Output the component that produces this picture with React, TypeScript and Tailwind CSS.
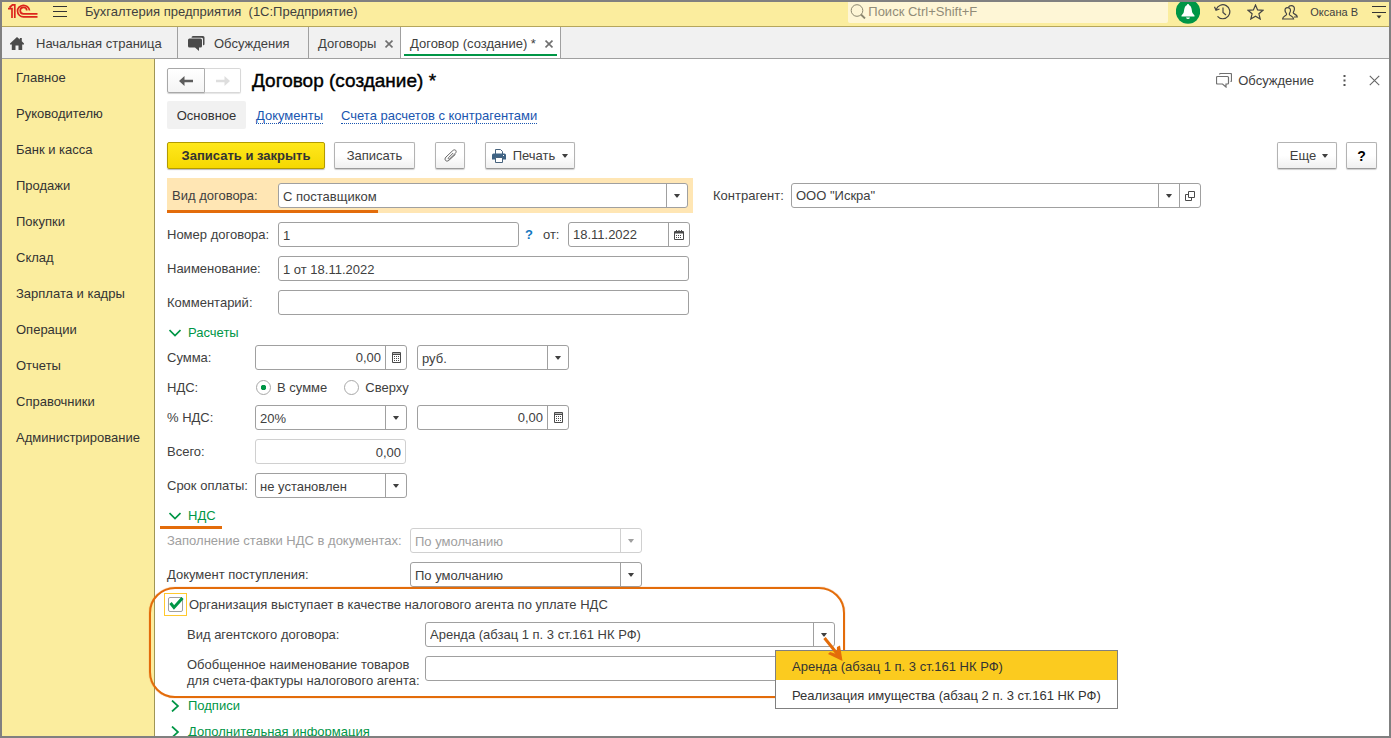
import React from "react";
import type { ReactNode } from "react";

const sections = [
  "Главное",
  "Руководителю",
  "Банк и касса",
  "Продажи",
  "Покупки",
  "Склад",
  "Зарплата и кадры",
  "Операции",
  "Отчеты",
  "Справочники",
  "Администрирование",
];

const agentKinds = [
  "Аренда (абзац 1 п. 3 ст.161 НК РФ)",
  "Реализация имущества (абзац 2 п. 3 ст.161 НК РФ)",
];

const field = "h-[25px] rounded-[3px] border border-[#a0a0a0] bg-white";
const input = "min-w-0 w-full bg-transparent px-1 pt-px outline-none";
const plainButton =
  "flex h-[27px] items-center justify-center rounded-[2px] border border-[#b3b3b3] border-b-[#9a9a9a] bg-linear-to-b from-white from-50% to-[#f0f0f0] shadow-[0_1px_1px_#cfcfcf]";

function Caret() {
  return (
    <svg width="6" height="4" viewBox="0 0 6 4" aria-hidden="true" className="shrink-0">
      <path d="M0 0H6L3.500 3.500H2.500Z" fill="currentColor" />
    </svg>
  );
}

function Calculator() {
  return (
    <svg width="9" height="11" viewBox="0 0 9 11" fill="none" aria-hidden="true">
      <path d="M1 1H8V2H1Z" fill="#b5b5b5" />
      <path d="M.5 .5H8.500V10.500H.5ZM.5 2.500H8.500" stroke="#4a4a4a" />
      <path d="M2 4.500H7M2 6.500H7M2 8.500H7" stroke="#4a4a4a" strokeDasharray="1 1" />
    </svg>
  );
}

function Calendar() {
  return (
    <svg width="10" height="10" viewBox="0 0 10 10" fill="none" aria-hidden="true">
      <path d="M.5 1.500H9.500V9.500H.5Z" stroke="#4a4a4a" />
      <path d="M1 2H9V3.500H1Z" fill="#4a4a4a" />
      <path d="M2.500 0V2M5 0V2M7.500 0V2" stroke="#4a4a4a" />
      <path d="M2 5.500H8M2 7.500H8" stroke="#4a4a4a" strokeDasharray="1 1" />
    </svg>
  );
}

function OpenIcon() {
  return (
    <svg width="10" height="10" viewBox="0 0 10 10" fill="none" aria-hidden="true">
      <path d="M3.500 .5H9.500V6.500H3.500ZM3.500 3.500H.5V9.500H6.500V6.500" stroke="#4a4a4a" />
    </svg>
  );
}

function Cross({ size }: { size: number }) {
  return (
    <svg width={size} height={size} viewBox="0 0 10 10" aria-hidden="true">
      <path d="M.7 .7L9.300 9.300M9.300 .7L.7 9.300" stroke="currentColor" strokeWidth={size < 10 ? 2 : 1} />
    </svg>
  );
}

function Chats({ filled }: { filled?: boolean }) {
  return filled ? (
    <svg width="17" height="15" viewBox="0 0 17 15" aria-hidden="true">
      <path d="M5 0H15Q16.500 0 16.500 1.500V8.500L15 9.500V3Q15 1.700 13.500 1.700H3.500Q3.500 0 5 0Z" fill="#4a4a4a" />
      <path d="M1.500 2.500H12.500Q14 2.500 14 4V10Q14 11.500 12.500 11.500H11V15L7 11.500H1.500Q0 11.500 0 10V4Q0 2.500 1.500 2.500Z" fill="#4a4a4a" />
    </svg>
  ) : (
    <svg width="16" height="15" viewBox="0 0 16 15" fill="none" stroke="#707070" strokeWidth="1.200" aria-hidden="true">
      <path d="M1.500 3.500H11.500Q12.500 3.500 12.500 4.500V10Q12.500 11 11.500 11H10V14L6.500 11H1.500Q.5 11 .5 10V4.500Q.5 3.500 1.500 3.500Z" />
      <path d="M3.500 1.500Q3.700 .5 4.500 .5H14.500Q15.500 .5 15.500 1.500V7.500Q15.500 8.500 14.500 8.500" />
    </svg>
  );
}

function Logo() {
  return (
    <svg width="30" height="14" viewBox="0 0 30 14" fill="none" stroke="#dc241c" aria-label="1С" className="mt-0.5 self-start">
      <path d="M0 4.700H4V14M1.500 3.500L4.500 .8H6.800V14" strokeWidth="1.700" />
      <path d="M21.500 6.500A6 5.800 0 1 0 15.500 12.900H29.500" strokeWidth="1.700" />
      <path d="M18.800 6.500A3.300 3.300 0 1 0 15.500 9.900H29.500" strokeWidth="1.700" />
    </svg>
  );
}

function Select({ id, value, className, disabled, label }: { id: string; value: string; className: string; disabled?: boolean; label?: string }) {
  return (
    <div
      className={`grid grid-cols-[1fr_21px] rounded-[3px] border bg-white h-[25px] ${disabled ? "border-[#d0d0d0] text-[#a0a0a0]" : "border-[#a0a0a0]"} ${className}`}
    >
      <select
        id={id}
        aria-label={label}
        disabled={disabled}
        className="col-span-2 col-start-1 row-start-1 min-w-0 appearance-none bg-transparent pl-1 pt-0.5 opacity-100 outline-none"
      >
        <option>{value}</option>
      </select>
      <span
        className={`pointer-events-none col-start-2 row-start-1 flex items-center justify-center border-l ${disabled ? "border-[#d0d0d0]" : "border-[#a0a0a0]"}`}
      >
        <Caret />
      </span>
    </div>
  );
}

function InnerButton({ label, children }: { label: string; children: ReactNode }) {
  return (
    <button type="button" aria-label={label} className="flex w-[21px] shrink-0 items-center justify-center border-l border-[#a0a0a0]">
      {children}
    </button>
  );
}

function Group({ title, open }: { title: string; open?: boolean }) {
  return (
    <button type="button" aria-expanded={!!open} className="flex h-[26px] items-center gap-[7px] pl-0.5 pt-0.5 text-[#009646]">
      <svg width="12" height="12" viewBox="0 0 12 12" fill="none" stroke="currentColor" strokeWidth="1.700" aria-hidden="true">
        {open ? <path d="M.5 3L6 8.500L11.500 3" /> : <path d="M3 .5L9 6L3 11.500" />}
      </svg>
      {title}
    </button>
  );
}

function TopBar() {
  return (
    <header className="flex h-[25px] shrink-0 items-center border-b border-[#b5a65c] bg-[#fbed9e] pl-1.5 pr-[3px]">
      <Logo />
      <button type="button" aria-label="Меню" className="ml-[15px] mt-1 self-start">
        <svg width="14" height="12" viewBox="0 0 14 12" stroke="#333" aria-hidden="true" className="block">
          <path d="M0 .5H14M0 5.500H14M0 10.500H14" />
        </svg>
      </button>
      <h1 className="ml-[18px] whitespace-pre pb-1">Бухгалтерия предприятия  (1С:Предприятие)</h1>
      <label className="ml-auto flex h-[21px] w-[320px] items-center self-start rounded-b-[2px] bg-[#fef6d6] pl-0.5">
        <svg width="16" height="15" viewBox="0 0 16 15" fill="none" stroke="#8c8770" aria-hidden="true" className="-mt-0.5">
          <circle cx="7" cy="6.500" r="5.800" />
          <path d="M11 10.500L15 14.500" strokeWidth="1.800" />
        </svg>
        <input aria-label="Поиск" placeholder="Поиск Ctrl+Shift+F" className="min-w-0 flex-1 bg-transparent pl-0.5 pb-0.5 outline-none placeholder:text-[#918c78]" />
      </label>
      <button type="button" aria-label="Уведомления" className="ml-2 self-start">
        <svg width="24" height="22" viewBox="0 0 24 22" aria-hidden="true" className="block">
          <circle cx="12" cy="9.500" r="12.200" fill="#009646" />
          <path d="M12 2Q13 2 13.200 3.200C16 4.500 15.500 8 16.500 11L18.500 13.500V14.500H5.500V13.500L7.500 11C8.500 8 8 4.500 10.800 3.200Q11 2 12 2ZM10 15.500H14Q13.500 17 12 17T10 15.500Z" fill="#fff" />
        </svg>
      </button>
      <button type="button" aria-label="История" className="ml-3.5 pb-1">
        <svg width="17" height="16" viewBox="0 0 17 16" fill="none" stroke="#444" strokeWidth="1.200" aria-hidden="true" className="block">
          <path d="M2.200 5.500A7 7 0 1 1 3.500 12.300M.5 2.800L2 6.200L5.500 5M9 3.500V8.500L12 11" />
        </svg>
      </button>
      <button type="button" aria-label="Избранное" className="ml-4 pb-1">
        <svg width="17" height="16" viewBox="0 0 17 16" fill="none" stroke="#444" strokeWidth="1.200" aria-hidden="true" className="block">
          <path d="M8.500 1L10.600 5.900L16 6.300L11.900 9.800L13.200 15L8.500 12.200L3.800 15L5.100 9.800L1 6.300L6.400 5.900Z" />
        </svg>
      </button>
      <button type="button" className="ml-[18px] flex items-center gap-3 pb-1 text-[11px]">
        <svg width="16" height="15" viewBox="0 0 16 15" fill="none" stroke="#444" strokeWidth="1.200" aria-hidden="true">
          <path d="M6.500 2.300C7 1 8 .6 9.200 .6C11.500 .6 12.600 2.200 12.400 4.200C12.200 6 11.200 6.800 11.200 7.800C11.200 9.200 15.300 9.300 15.300 12H12" />
          <path d="M5.500 2.600C7.800 2.600 8.700 4.200 8.400 6C8.200 7.400 7.300 8.200 7.300 9.200C7.300 10.800 11.400 10.800 11.600 14H.6C.8 10.800 4.600 10.800 4.600 9.200C4.600 8.200 3.400 7.400 3.100 6C2.800 4.200 3.500 2.600 5.500 2.600Z" />
        </svg>
        Оксана В
      </button>
      <button type="button" aria-label="Настройки" className="ml-3.5 mt-1 self-start">
        <svg width="14" height="13" viewBox="0 0 14 13" aria-hidden="true" className="block">
          <path d="M0 .5H14M0 6.500H14" stroke="#333" />
          <path d="M4.500 9.500H9.500L7 12.500Z" fill="#333" />
        </svg>
      </button>
    </header>
  );
}

function Tabs() {
  const tab = "flex items-center border-r border-[#a0a0a0] pt-0.5";
  return (
    <nav className="flex h-8 shrink-0 border-b border-[#a0a0a0] bg-[#f1f1f1]">
      <a href="#home" className={`${tab} w-[176px] gap-3 pl-2`}>
        <svg width="14" height="13" viewBox="0 0 14 13" fill="#4a4a4a" aria-hidden="true">
          <path d="M7 0L9.800 2.500V1H11.800V4.300L14 6.500V7.500H12.200V13H8.500V8.500H5.500V13H1.800V7.500H0V6.500Z" />
        </svg>
        Начальная страница
      </a>
      <a href="#talks" className={`${tab} w-[131px] gap-[9px] pl-2.5`}>
        <Chats filled />
        Обсуждения
      </a>
      <div className={`${tab} w-[92px] justify-between pl-[9px] pr-[7px]`}>
        <a href="#contracts">Договоры</a>
        <button type="button" aria-label="Закрыть Договоры" className="text-[#707070]"><Cross size={8} /></button>
      </div>
      <div className={`${tab} relative w-40 justify-between bg-white pl-[9px] pr-[7px]`}>
        <a href="#contract">Договор (создание) *</a>
        <button type="button" aria-label="Закрыть Договор" className="text-[#707070]"><Cross size={8} /></button>
        <span className="absolute inset-x-[3px] bottom-0.5 h-0.5 bg-[#009646]" />
      </div>
    </nav>
  );
}

function TitleBar() {
  return (
    <div className="flex h-[25px] items-center">
      <div className="flex h-[25px]">
        <button type="button" aria-label="Назад" className="flex w-[38px] items-center justify-center rounded-l-[2px] border border-[#a8a8a8] bg-linear-to-b from-white to-[#f4f4f4] shadow-[0_1px_1px_#cfcfcf]">
          <svg width="14" height="10" viewBox="0 0 14 10" aria-hidden="true">
            <path d="M0 5L5.500 0V3.800H14V6.200H5.500V10Z" fill="#5c5c5c" />
          </svg>
        </button>
        <button type="button" aria-label="Вперед" className="flex w-9 items-center justify-center rounded-r-[2px] border border-l-0 border-[#d8d8d8] bg-white shadow-[0_1px_1px_#e6e6e6]">
          <svg width="14" height="10" viewBox="0 0 14 10" aria-hidden="true">
            <path d="M14 5L8.500 0V3.800H0V6.200H8.500V10Z" fill="#dedede" />
          </svg>
        </button>
      </div>
      <h2 className="ml-[11px] text-[19px] text-black [-webkit-text-stroke:0.4px_black]">Договор (создание) *</h2>
      <button type="button" className="ml-auto flex items-center gap-1.5">
        <Chats />
        Обсуждение
      </button>
      <button type="button" aria-label="Ещё действия" className="ml-[29px]">
        <svg width="3" height="11" viewBox="0 0 3 11" fill="#555" aria-hidden="true">
          <path d="M.5 0H2.500V2H.5ZM.5 4.500H2.500V6.500H.5ZM.5 9H2.500V11H.5Z" />
        </svg>
      </button>
      <button type="button" aria-label="Закрыть" className="ml-[23px] mr-[-3px] text-[#666]"><Cross size={11} /></button>
    </div>
  );
}

function CommandBar() {
  return (
    <div className="mt-[13px] flex">
      <button type="button" className="flex h-[27px] w-[158px] items-center justify-center rounded-[2px] border border-[#b39b00] bg-linear-to-b from-[#ffe81a] to-[#f5d800] font-bold text-[#333] shadow-[0_1px_1px_#bbb]">
        Записать и закрыть
      </button>
      <button type="button" className={`${plainButton} ml-[9px] w-[81px]`}>Записать</button>
      <button type="button" aria-label="Файлы" className={`${plainButton} ml-5 w-[30px]`}>
        <svg width="13" height="13" viewBox="0 0 13 13" fill="none" stroke="#666" aria-hidden="true">
          <path d="M9.200 4L4.600 8.600C3.600 9.600 4.800 10.700 5.700 9.800L11.300 4.400C13.500 2 11 -.4 8.800 1.600L2 8C-.5 10.500 2.300 13.600 4.900 11.300L11.500 5.300" />
        </svg>
      </button>
      <button type="button" className={`${plainButton} ml-5 w-[90px] gap-[7px]`}>
        <svg width="14" height="14" viewBox="0 0 14 14" aria-hidden="true">
          <path d="M3.500 5V.5H8.500L10.500 2.500V5" fill="#fff" stroke="#46627d" />
          <path d="M1.500 4.500H12.500Q14 4.500 14 6V10.500H0V6Q0 4.500 1.500 4.500Z" fill="#3f6384" />
          <path d="M3.500 8.500H10.500V13.500H3.500Z" fill="#fff" stroke="#46627d" />
          <path d="M11 6H12V7H11Z" fill="#fff" />
        </svg>
        Печать
        <Caret />
      </button>
      <button type="button" className={`${plainButton} ml-auto w-[60px] gap-1.5 pl-1`}>
        Еще
        <Caret />
      </button>
      <button type="button" aria-label="Справка" className={`${plainButton} ml-[9px] w-[31px] text-[14px] font-bold text-black`}>?</button>
    </div>
  );
}

function GeneralFields() {
  const row = "flex items-center";
  const label = "w-[111px] shrink-0";
  return (
    <>
      <div className="mt-[9px] flex items-start">
        <div className="relative flex h-[35px] w-[526px] items-center bg-[#ffe6b4] pl-[5px]">
          <label htmlFor="kind" className="w-[106px] shrink-0">Вид договора:</label>
          <Select id="kind" value="С поставщиком" className="w-[410px]" />
          <span className="absolute bottom-0 left-0 h-[3px] w-[211px] bg-[#e36c0a]" />
        </div>
        <div className="ml-5 flex h-[35px] items-center">
          <label htmlFor="partner" className="w-[78px]">Контрагент:</label>
          <div className={`${field} flex w-[410px]`}>
            <input id="partner" defaultValue={'ООО "Искра"'} className={input} />
            <InnerButton label="Выбрать контрагента"><Caret /></InnerButton>
            <InnerButton label="Открыть контрагента"><OpenIcon /></InnerButton>
          </div>
        </div>
      </div>
      <div className="mt-[9px] flex flex-col gap-[9px]">
        <div className={row}>
          <label htmlFor="number" className={label}>Номер договора:</label>
          <input id="number" defaultValue="1" className={`${field} w-[241px] px-1 pt-px`} />
          <button type="button" aria-label="Подсказка" className="ml-1.5 font-bold text-[#1477bf]">?</button>
          <label htmlFor="date" className="ml-2.5 w-[25px]">от:</label>
          <div className={`${field} flex w-[122px]`}>
            <input id="date" defaultValue="18.11.2022" className={input} />
            <InnerButton label="Календарь"><Calendar /></InnerButton>
          </div>
        </div>
        <div className={row}>
          <label htmlFor="name" className={label}>Наименование:</label>
          <input id="name" defaultValue="1 от 18.11.2022" className={`${field} w-[411px] px-1 pt-px`} />
        </div>
        <div className={row}>
          <label htmlFor="comment" className={label}>Комментарий:</label>
          <input id="comment" className={`${field} w-[411px] px-1 pt-px`} />
        </div>
      </div>
    </>
  );
}

function Radio({ label, checked }: { label: string; checked?: boolean }) {
  return (
    <label className="flex items-center gap-1.5">
      <input
        type="radio"
        name="vat"
        defaultChecked={checked}
        className="size-[15px] appearance-none rounded-full border border-[#a8a8a8] bg-white checked:bg-[radial-gradient(circle,#009646_0_2.500px,#fff_3px)]"
      />
      {label}
    </label>
  );
}

function Amount({ id, label }: { id: string; label: string }) {
  return (
    <div className={`${field} flex w-[152px]`}>
      <input id={id} aria-label={label} defaultValue="0,00" className={`${input} text-right`} />
      <InnerButton label="Калькулятор"><Calculator /></InnerButton>
    </div>
  );
}

function Payments() {
  const label = "w-[88px] shrink-0";
  return (
    <section className="mt-1">
      <Group title="Расчеты" open />
      <div className="flex items-center">
        <label htmlFor="sum" className={label}>Сумма:</label>
        <Amount id="sum" label="Сумма" />
        <Select id="currency" label="Валюта" value="руб." className="ml-2.5 w-[152px]" />
      </div>
      <div role="radiogroup" aria-label="НДС" className="flex h-[35px] items-center">
        <span className={label}>НДС:</span>
        <div className="flex gap-[17px] pl-px">
          <Radio label="В сумме" checked />
          <Radio label="Сверху" />
        </div>
      </div>
      <div className="flex items-center">
        <label htmlFor="rate" className={label}>% НДС:</label>
        <Select id="rate" value="20%" className="w-[152px]" />
        <div className="ml-2.5"><Amount id="vatSum" label="Сумма НДС" /></div>
      </div>
      <div className="mt-[9px] flex items-center">
        <label htmlFor="total" className={label}>Всего:</label>
        <input id="total" readOnly defaultValue="0,00" className="h-[25px] w-[151px] rounded-[3px] border border-[#d0d0d0] px-1 pt-px text-right" />
      </div>
      <div className="mt-[9px] flex items-center">
        <label htmlFor="term" className={label}>Срок оплаты:</label>
        <Select id="term" value="не установлен" className="w-[152px]" />
      </div>
    </section>
  );
}

function AgentBlock() {
  return (
    <div className="relative">
      <span className="pointer-events-none absolute -left-[18px] top-0 h-[111px] w-[696px] rounded-[26px] border-2 border-[#e36c0a] shadow-[0_0_1px_#e36c0a]" />
      <label className="flex h-[35px] items-center">
        <span className="-ml-[3px] mr-0.5 grid size-[23px] place-items-center border border-[#ffc92e]">
          <input type="checkbox" defaultChecked className="peer col-start-1 row-start-1 size-[15px] appearance-none rounded-[2px] border border-[#a0a0a0] bg-white" />
          <svg width="17" height="15" viewBox="0 0 17 15" aria-hidden="true" className="pointer-events-none invisible col-start-1 row-start-1 peer-checked:visible">
            <path d="M3.500 6L7 10.500L15.500 1" fill="none" stroke="#009646" strokeWidth="3" />
          </svg>
        </span>
        Организация выступает в качестве налогового агента по уплате НДС
      </label>
      <div className="flex items-center pl-5">
        <label htmlFor="agentKind" className="w-[238px] shrink-0">Вид агентского договора:</label>
        <div className={`${field} relative flex w-[410px]`}>
          <input id="agentKind" role="combobox" aria-expanded="true" aria-controls="agentKinds" defaultValue={agentKinds[0]} className={input} />
          <InnerButton label="Выбрать вид договора"><Caret /></InnerButton>
          <ul id="agentKinds" role="listbox" className="absolute left-[349px] top-[27px] z-10 h-[59px] w-[343px] border border-[#808080] bg-white text-[#333]">
            {agentKinds.map((kind, i) => (
              <li key={kind} role="option" aria-selected={i === 0} className="flex h-[29px] items-center whitespace-nowrap px-4 pt-0.5 aria-selected:bg-[#fbcb1f]">
                {kind}
              </li>
            ))}
          </ul>
          <svg width="22" height="27" viewBox="0 0 22 27" fill="none" stroke="#e36c0a" strokeWidth="3" aria-hidden="true" className="pointer-events-none absolute left-[397px] top-[13px] z-20">
            <path d="M1.500 2L16 20" />
            <path d="M19.500 25L5 18L7 16L13.500 18L14 11L17 9.500Z" fill="#e36c0a" stroke="none" />
          </svg>
        </div>
      </div>
      <div className="mt-[9px] flex h-[25px] items-center pl-5">
        <label htmlFor="goods" className="w-[238px] shrink-0 pt-2 leading-4">
          Обобщенное наименование товаров
          <br />
          для счета-фактуры налогового агента:
        </label>
        <input id="goods" className={`${field} w-[410px] px-1`} />
      </div>
    </div>
  );
}

function Vat() {
  const label = "w-[243px] shrink-0";
  return (
    <section className="mt-1">
      <div className="relative">
        <Group title="НДС" open />
        <span className="absolute -bottom-px -left-[7px] h-[3px] w-[62px] bg-[#e36c0a]" />
      </div>
      <div className="flex items-center">
        <label htmlFor="fill" className={`${label} text-[#a0a0a0]`}>Заполнение ставки НДС в документах:</label>
        <Select id="fill" value="По умолчанию" disabled className="w-[232px]" />
      </div>
      <div className="mt-[9px] flex items-center">
        <label htmlFor="receipt" className={label}>Документ поступления:</label>
        <Select id="receipt" value="По умолчанию" className="w-[232px]" />
      </div>
      <AgentBlock />
    </section>
  );
}

export default function App() {
  return (
    <div className="flex h-screen flex-col overflow-hidden border-2 border-[#808080] bg-white font-['Liberation_Sans',Arial,sans-serif] text-[13px] leading-4 text-[#404040]">
      <TopBar />
      <Tabs />
      <div className="flex min-h-0 flex-1">
        <nav className="flex w-[153px] shrink-0 flex-col border-r border-[#a09555] bg-[#fbed9e] text-[#333]">
          {sections.map((name) => (
            <a key={name} href="#section" className="flex h-9 items-center pl-3.5 pt-0.5">{name}</a>
          ))}
        </nav>
        <main className="min-w-0 flex-1 px-3 pt-[9px]">
          <TitleBar />
          <nav className="mt-2 flex h-7 items-center">
            <a href="#main" className="flex h-7 w-[79px] items-center justify-center rounded-[2px] bg-[#f1f1f1] pt-0.5 text-[#333]">Основное</a>
            <a href="#docs" className="ml-2.5 mt-0.5 border-b border-dotted border-[#1a56b0] leading-[15px] text-[#1a56b0]">Документы</a>
            <a href="#accounts" className="ml-[18px] mt-0.5 border-b border-dotted border-[#1a56b0] leading-[15px] text-[#1a56b0]">Счета расчетов с контрагентами</a>
          </nav>
          <CommandBar />
          <GeneralFields />
          <Payments />
          <Vat />
          <div className="mt-[11px] flex flex-col items-start">
            <Group title="Подписи" />
            <Group title="Дополнительная информация" />
          </div>
        </main>
      </div>
    </div>
  );
}
